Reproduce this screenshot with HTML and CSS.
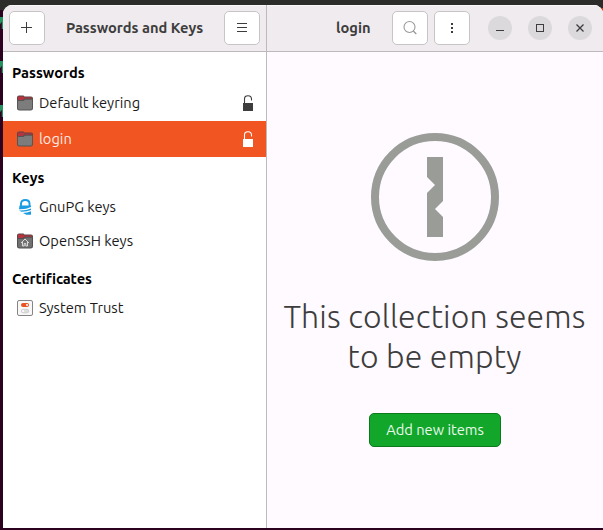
FILE: index.html
```
<!DOCTYPE html>
<html lang="en">
<head>
<meta charset="utf-8">
<title>Passwords and Keys</title>
<link rel="stylesheet" href="styles.css">
</head>
<body>
<i class="terminal t1"></i><i class="terminal t2"></i><i class="terminal t3"></i>
<i class="corner"></i>
<div class="window">
  <aside class="sidebar">
    <header class="bar">
      <button class="btn" aria-label="Add"><svg width="12" height="12" viewBox="0 0 12 12" shape-rendering="crispEdges"><path d="M5 0h1v11h-1zM0 5h11v1H0z" fill="#3d3d3d"/></svg></button>
      <h1 class="title main-title">Passwords and Keys</h1>
      <button class="btn" aria-label="Menu"><svg width="10" height="10" viewBox="0 0 10 10" shape-rendering="crispEdges"><path d="M0 0h10v1H0zM0 4h10v1H0zM0 8h10v1H0z" fill="#3d3d3d"/></svg></button>
    </header>
    <nav class="list">
      <h2 class="head">Passwords</h2>
      <div class="row tall"><svg class="icon" viewBox="0 0 16 16"><path d="M0 5V2.500Q0 .5 2 .5H6.500L7.500 1.500H14q2 0 2 2V5z" fill="#5a4547"/><path d="M1 1.500h5.500l1 1H15v1.200H7L6 5H1z" fill="#b5343f"/><path d="M0 5h6l1.500-1.300H16V13q0 2.500-2.500 2.500h-11Q0 15.500 0 13z" fill="#555"/><path d="M1 6h5.500L8 4.700h7V13q0 1.500-1.500 1.500h-11Q1 14.500 1 13z" fill="#7c7c7c"/></svg><span>Default keyring</span><svg class="lock" viewBox="0 0 10 16"><path d="M1.500 8V4Q1.500 .7 5 .7T8.500 4V5.500" fill="none" stroke="currentColor" stroke-width="1.100"/><path d="M0 8h10v8H0z" fill="currentColor"/></svg></div>
      <div class="row tall selected"><svg class="icon" viewBox="0 0 16 16"><path d="M0 5V2.500Q0 .5 2 .5H6.500L7.500 1.500H14q2 0 2 2V5z" fill="#5a4547"/><path d="M1 1.500h5.500l1 1H15v1.200H7L6 5H1z" fill="#b5343f"/><path d="M0 5h6l1.500-1.300H16V13q0 2.500-2.500 2.500h-11Q0 15.500 0 13z" fill="#555"/><path d="M1 6h5.500L8 4.700h7V13q0 1.500-1.500 1.500h-11Q1 14.500 1 13z" fill="#7c7c7c"/></svg><span>login</span><svg class="lock" viewBox="0 0 10 16"><path d="M1.500 8V4Q1.500 .7 5 .7T8.500 4V5.500" fill="none" stroke="currentColor" stroke-width="1.100"/><path d="M0 8h10v8H0z" fill="currentColor"/></svg></div>
      <h2 class="head">Keys</h2>
      <div class="row"><svg class="icon" viewBox="0 0 16 16"><path d="M4 7V4.500Q4 1 8.200 1T12.500 4.500V7" fill="none" stroke="#1a9ce2" stroke-width="1.900"/><path d="M2.500 6.500h11.500V8Q9 10.500 2 10.200z" fill="#1a9ce2"/><path d="M2 11.500Q9 11.800 14 9.500V11Q10 12.800 4.500 12.800zM6 14q4.500-.3 8-1.800v3.600H9.500z" fill="#1a9ce2"/></svg><span>GnuPG keys</span></div>
      <div class="row"><svg class="icon" viewBox="0 0 16 16"><path d="M0 5V2.500Q0 .5 2 .5H6.500L7.500 1.500H14q2 0 2 2V5z" fill="#5a4547"/><path d="M1 1.500h5.500l1 1H15v1.200H7L6 5H1z" fill="#b5343f"/><path d="M0 5h6l1.500-1.300H16V13q0 2.500-2.500 2.500h-11Q0 15.500 0 13z" fill="#505050"/><path d="M1 6h5.500L8 4.700h7V13q0 1.500-1.500 1.500h-11Q1 14.500 1 13z" fill="#707070"/><path d="M4 10l4-4 4 4M5.500 9V13h1.700v-2.500h1.600V13h1.700V9" fill="none" stroke="#e4e4e4" stroke-width=".9"/></svg><span>OpenSSH keys</span></div>
      <h2 class="head cert">Certificates</h2>
      <div class="row"><svg class="icon" viewBox="0 0 16 16"><rect x=".5" y=".5" width="15" height="15" rx="1.500" fill="#f8f8f8" stroke="#858585"/><rect x="4" y="3" width="8" height="4" rx="2" fill="#e95420"/><circle cx="10" cy="5" r="1" fill="#fff"/><rect x="4.300" y="9.300" width="7.500" height="3.500" rx="1.750" fill="#ddd" stroke="#c4c4c4" stroke-width=".7"/><circle cx="6.200" cy="11" r="1.100" fill="#fff"/></svg><span>System Trust</span></div>
    </nav>
  </aside>
  <main class="content">
    <header class="bar right">
      <h1 class="title login-title">login</h1>
      <button class="btn" aria-label="Search"><svg width="16" height="16" viewBox="0 0 16 16"><circle cx="7.500" cy="7" r="5.500" fill="none" stroke="#999" stroke-width="1.100"/><path d="M11.300 11l3 3" stroke="#999" stroke-width="1.300"/></svg></button>
      <button class="btn more" aria-label="More"><svg width="2" height="10" viewBox="0 0 2 10" shape-rendering="crispEdges"><path d="M0 0h2v2H0zM0 4h2v2H0zM0 8h2v2H0z" fill="#3d3d3d"/></svg></button>
      <button class="ctl first" aria-label="Minimize"><svg width="8" height="8" viewBox="0 0 8 8" shape-rendering="crispEdges"><path d="M0 6h8v1H0z" fill="#3d3d3d"/></svg></button>
      <button class="ctl" aria-label="Maximize"><svg width="8" height="8" viewBox="0 0 8 8" shape-rendering="crispEdges"><path d="M.5.5h7v7h-7z" fill="none" stroke="#3d3d3d"/></svg></button>
      <button class="ctl" aria-label="Close"><svg width="8" height="8" viewBox="0 0 8 8"><path d="M.5.500l7 7M7.500.500l-7 7" stroke="#3d3d3d" stroke-width="1.300"/></svg></button>
    </header>
    <section class="empty">
      <svg class="emblem" viewBox="0 0 128 128"><circle cx="64" cy="64" r="60" fill="none" stroke="#9a9c98" stroke-width="8"/><path d="M56 24h16v44l-8 8 8 8v20H56V60l8-8-8-8z" fill="#9a9c98"/></svg>
      <p class="message">This collection seems<br>to be empty</p>
      <button class="add">Add new items</button>
    </section>
  </main>
</div>
</body>
</html>
```
FILE: styles.css
```
* { box-sizing: border-box; }
body { margin: 0; width: 603px; height: 530px; padding: 5px 0 2px 3px; overflow: hidden; position: relative; background: linear-gradient(#2c2c2a 0 10px, #2b0320 10px); font: 14.67px/20px "Ubuntu", "Noto Sans", sans-serif; color: #1a1a1a; }
.terminal { position: absolute; left: 0; width: 3px; height: 12px; background: #269060; clip-path: polygon(0 0, 100% 0, 100% 100%, 60% 100%, 60% 40%, 0 60%); }
.t1 { top: 17px; }
.t2 { top: 61px; }
.t3 { top: 105px; }
.corner { position: absolute; right: 0; top: 8px; width: 4px; height: 5px; background: #d9431c; }
.window { position: relative; display: flex; width: 600px; height: 523px; border-radius: 9px 9px 0 0; background: #fff; overflow: hidden; }
.sidebar { width: 264px; border-right: 1px solid #bdb9bc; }
.content { flex: 1; display: flex; flex-direction: column; background: #fefaff; }
.bar { height: 47px; display: flex; align-items: center; justify-content: space-between; padding: 0 6px; border-bottom: 1px solid #bdb9bc; background: #efebee; box-shadow: inset 0 1px #f9f7f8; }
h1, h2, p { margin: 0; }
button { font: inherit; padding: 0; }
.btn { width: 36px; height: 34px; border: 1px solid #c8c5c7; border-radius: 5px; background: #fff; display: flex; align-items: center; justify-content: center; flex: none; }
.title { font-size: 14.67px; line-height: 20px; font-weight: 700; color: #3d3d3d; white-space: nowrap; }
.right { justify-content: flex-start; padding: 0; }
.login-title { width: 125px; padding-left: 69px; }
.more { margin-left: 6px; }
.ctl { width: 24px; height: 24px; border: 0; border-radius: 50%; background: #dcd9dc; display: flex; align-items: center; justify-content: center; margin-left: 16px; flex: none; }
.first { margin-left: 18px; }
.head { height: 33px; padding: 11px 0 0 9px; font-size: 14.67px; line-height: 20px; font-weight: 700; color: #000; }
.cert { letter-spacing: -.08px; }
.row { height: 34px; display: flex; align-items: center; padding: 0 13px 0 14px; white-space: nowrap; }
.tall { height: 36px; }
.selected { background: #f05522; color: #ffe9e1; }
.icon { width: 16px; height: 16px; margin-right: 6px; flex: none; }
.lock { width: 10px; height: 16px; margin-left: auto; color: #3d3d3d; }
.selected .lock { color: #fff; }
.empty { display: flex; flex-direction: column; align-items: center; padding-top: 81px; }
.emblem { width: 128px; height: 128px; }
.message { margin: 35px 1px 0 0; font-size: 32px; line-height: 40px; font-weight: 300; letter-spacing: .14px; color: #3d3d3d; text-align: center; white-space: nowrap; }
.add { margin-top: 37px; width: 132px; height: 34px; border: 1px solid #0b7a1b; border-radius: 5px; background: #12a62b; color: #e9f9eb; }
```
